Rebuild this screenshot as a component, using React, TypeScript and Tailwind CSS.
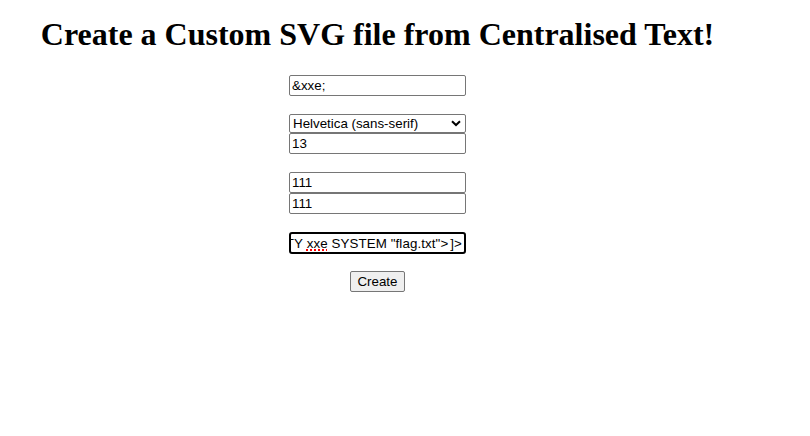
import React from "react";

const inputBox =
  "w-[177px] h-[21px] border border-[#767676] rounded-[2px] bg-white px-[2px] flex items-center text-left text-[13.33px] leading-[15px] text-black whitespace-nowrap overflow-hidden";

export default function App() {
  return (
    <div className="min-h-screen bg-white font-['Liberation_Serif',serif] text-black">
      <div className="w-[755px] pt-[16px] flex flex-col items-center">
        <h1 className="text-[32px] font-bold leading-[37px] text-center">
          Create a Custom SVG file from Centralised Text!
        </h1>

        <div className="mt-[22px] flex flex-col items-center font-['Liberation_Sans',Arial,sans-serif]">
          <div className={inputBox}>&amp;xxe;</div>

          <div className="h-[18px]" />
          <div className="w-[177px] h-[19px] border border-[#767676] rounded-[2px] bg-white pl-[3px] pr-[4px] flex items-center justify-between text-[13.33px] leading-[15px]">
            <span>Helvetica (sans-serif)</span>
            <svg width="10" height="7" viewBox="0 0 10 7">
              <path d="M1 1.2 L5 5 L9 1.2" fill="none" stroke="#000" strokeWidth="2" />
            </svg>
          </div>
          <div className={inputBox}>13</div>

          <div className="h-[18px]" />
          <div className={inputBox}>111</div>
          <div className={inputBox}>111</div>

          <div className="h-[18px]" />
          <div className="w-[177px] h-[22px] border-2 border-black rounded-[3px] bg-white px-[2px] flex items-center justify-end text-[13.33px] leading-[15px] tracking-[0.1px] whitespace-nowrap overflow-hidden">
            <span>
              {"<!DOCTYPE foo [<!ENTITY "}
              <span className="underline decoration-dotted decoration-[#ff0000] decoration-2 underline-offset-2">xxe</span>
              {' SYSTEM "flag.txt">'}
            </span>
            <span className="inline-block w-px h-[16px] bg-black mx-[1px]" />
            <span>{"]>"}</span>
          </div>

          <div className="h-[17px]" />
          <button className="h-[21px] px-[6px] border border-[#767676] rounded-[2px] bg-[#efefef] text-[13.33px] leading-[15px] text-black">
            Create
          </button>
        </div>
      </div>
    </div>
  );
}
